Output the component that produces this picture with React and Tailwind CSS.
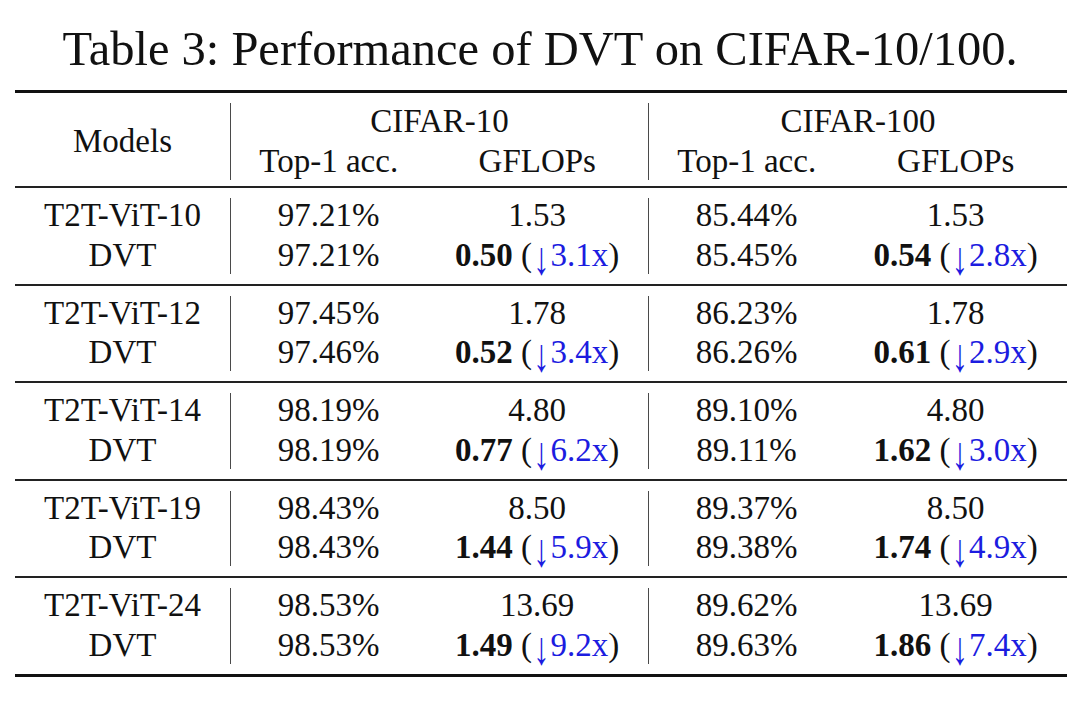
const groups = [
  { model: 'T2T-ViT-10', a1: '97.21%', g1: '1.53', d1: '97.21%', dg1: '0.50', r1: '3.1x', a2: '85.44%', g2: '1.53', d2: '85.45%', dg2: '0.54', r2: '2.8x' },
  { model: 'T2T-ViT-12', a1: '97.45%', g1: '1.78', d1: '97.46%', dg1: '0.52', r1: '3.4x', a2: '86.23%', g2: '1.78', d2: '86.26%', dg2: '0.61', r2: '2.9x' },
  { model: 'T2T-ViT-14', a1: '98.19%', g1: '4.80', d1: '98.19%', dg1: '0.77', r1: '6.2x', a2: '89.10%', g2: '4.80', d2: '89.11%', dg2: '1.62', r2: '3.0x' },
  { model: 'T2T-ViT-19', a1: '98.43%', g1: '8.50', d1: '98.43%', dg1: '1.44', r1: '5.9x', a2: '89.37%', g2: '8.50', d2: '89.38%', dg2: '1.74', r2: '4.9x' },
  { model: 'T2T-ViT-24', a1: '98.53%', g1: '13.69', d1: '98.53%', dg1: '1.49', r1: '9.2x', a2: '89.62%', g2: '13.69', d2: '89.63%', dg2: '1.86', r2: '7.4x' },
];

// bold value followed by the blue "(↓n.nx)" reduction
function Reduced({ value, ratio }) {
  return (
    <span>
      <b className="font-bold">{value}</b>{' '}
      (<span className="text-[#1c1ce0]">
        <span className="inline-block mx-[1px] scale-y-[1.4] translate-y-[4px]">↓</span>
        {ratio}
      </span>)
    </span>
  );
}

function Cell({ top, bottom, className = '' }) {
  return (
    <div className={`flex flex-col items-center justify-center ${className}`}>
      <span>{top}</span>
      <span>{bottom}</span>
    </div>
  );
}

export default function App() {
  return (
    <div className="w-[1080px] h-[707px] bg-white text-[#111] overflow-hidden font-['Liberation_Serif','Times_New_Roman',serif]">
      <h1 className="pt-[25px] text-center text-[48.5px] leading-[48px] font-normal">
        Table 3: Performance of DVT on CIFAR-10/100.
      </h1>

      <div className="ml-[15px] w-[1052px] mt-[17px] text-[33px] leading-[39.5px]">
        <div className="h-[3px] bg-[#111]" />

        {/* header */}
        <div className="h-[93px] flex pt-[10px] pb-[6px]">
          <div className="w-[215px] flex items-center justify-center">Models</div>
          <div className="w-[418px] border-l-[1.5px] border-[#4a4a4a] flex flex-col items-center justify-center">
            <span>CIFAR-10</span>
            <div className="flex w-full">
              <span className="w-[196px] text-center">Top-1 acc.</span>
              <span className="w-[222px] text-center">GFLOPs</span>
            </div>
          </div>
          <div className="w-[419px] border-l-[1.5px] border-[#4a4a4a] flex flex-col items-center justify-center">
            <span>CIFAR-100</span>
            <div className="flex w-full">
              <span className="w-[196px] text-center">Top-1 acc.</span>
              <span className="w-[223px] text-center">GFLOPs</span>
            </div>
          </div>
        </div>

        {groups.map((g) => (
          <div key={g.model}>
            <div className="h-[2px] bg-[#222]" />
            <div className="h-[95.5px] flex py-[10px]">
              <Cell className="w-[215px]" top={g.model} bottom="DVT" />
              <Cell className="w-[196px] border-l-[1.5px] border-[#4a4a4a]" top={g.a1} bottom={g.d1} />
              <Cell className="w-[222px]" top={g.g1} bottom={<Reduced value={g.dg1} ratio={g.r1} />} />
              <Cell className="w-[196px] border-l-[1.5px] border-[#4a4a4a]" top={g.a2} bottom={g.d2} />
              <Cell className="w-[223px]" top={g.g2} bottom={<Reduced value={g.dg2} ratio={g.r2} />} />
            </div>
          </div>
        ))}

        <div className="h-[3px] bg-[#111]" />
      </div>
    </div>
  );
}
